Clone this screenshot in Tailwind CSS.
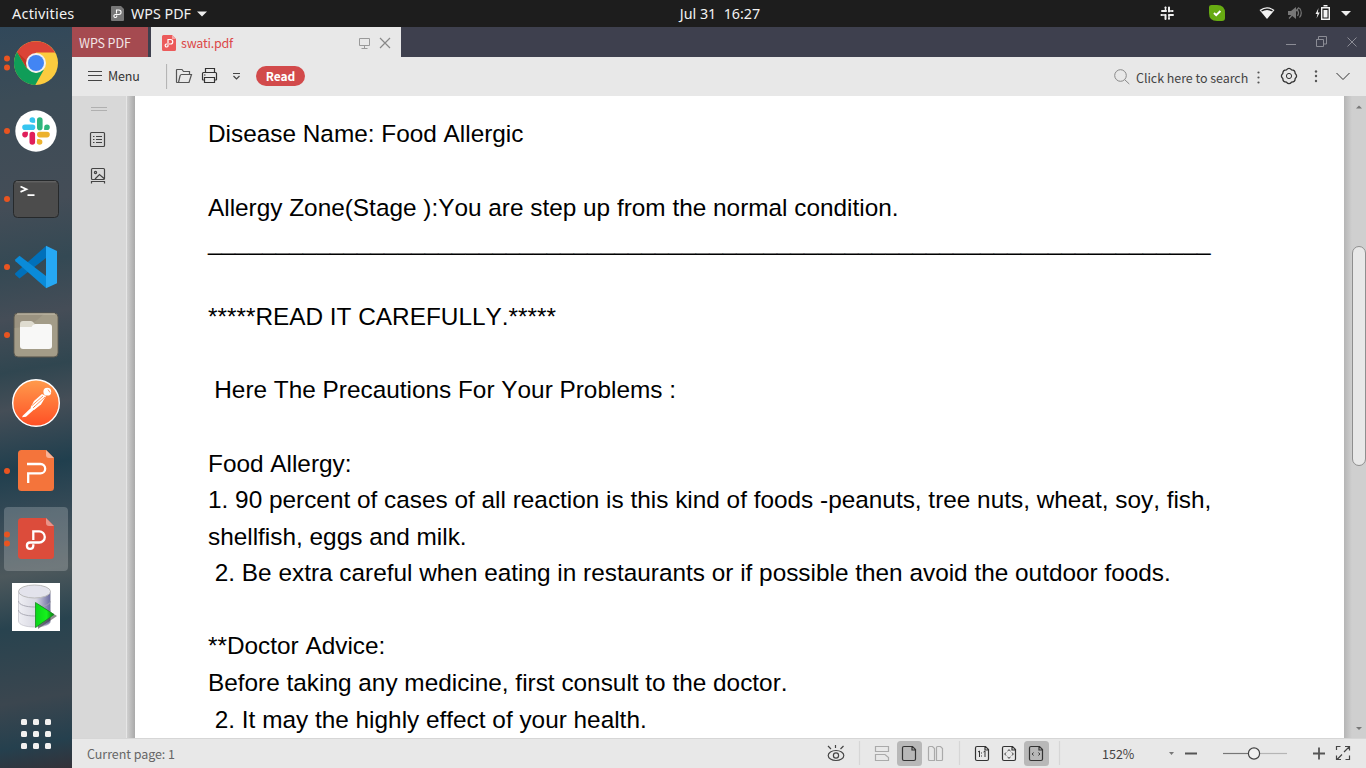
<!DOCTYPE html>
<html lang="en">
<head>
<meta charset="utf-8">
<title>WPS PDF</title>
<script src="https://cdn.jsdelivr.net/npm/@tailwindcss/browser@4"></script>
</head>
<body class="w-[1366px] h-[768px] overflow-hidden flex flex-col bg-[#e7e7e7] font-['Noto_Sans_CJK_SC',sans-serif]">
<!-- system bar -->
<header class="h-[27px] shrink-0 bg-[#1d1d1d] text-[#f2f2f2] grid grid-cols-[620px_200px_1fr] items-center font-['Noto_Sans',sans-serif] text-[14px] leading-[27px] whitespace-pre">
  <div class="flex items-center pl-3">
    <span class="w-[99px] text-[14.500px] tracking-[0.200px]">Activities</span>
    <svg class="w-[13px] h-[15px] mr-[7px]" viewBox="0 0 13 15"><path d="M1 0h9l3 3v11a1 1 0 0 1-1 1H1a1 1 0 0 1-1-1V1a1 1 0 0 1 1-1z" fill="#777"/><path d="M5.500 7.500V4h2.300a2.200 2.200 0 0 1 0 4.500H4.500a1.500 1.500 0 1 0 1.200 2.200V9.500" fill="none" stroke="#fff" stroke-width="1.100"/></svg>
    <span class="w-[66px] text-[14.300px]">WPS PDF</span>
    <svg class="w-[10px] h-[6px]" viewBox="0 0 10 6"><path d="M0 .5h10L5 5.500z" fill="#eee"/></svg>
  </div>
  <div class="text-center text-[14.300px]">Jul 31  16:27</div>
  <svg class="w-[286px] h-[27px] ml-[260px]" viewBox="1080 0 286 27" fill="none">
    <g stroke="#f2f2f2" stroke-width="2" stroke-linecap="round"><path d="M1165.500 7.500h0M1162 11h4M1169 7.500v4M1172.500 11h0M1161.500 15h0M1165.500 15v4M1169 15h4M1169 18.700h0"/><path d="M1165.500 7.500v3.500M1169 11h3.500M1161.500 15h4M1169 15v3.500" stroke-width="1.500"/></g>
    <path d="M1209 7q0-2 2.500-2h5.500q8 0 8 8v5q0 3-3 3h-5q-8 0-8-8z" fill="#67ab12"/><path d="m1214 13 2.200 2.200 4.200-4.200" stroke="#fff" stroke-width="2"/>
    <path d="M1259.500 10q7.500-5.500 15 0l-7.500 9z" fill="#f2f2f2"/><path d="M1261.500 11q5.500-3.500 11 0" stroke="#1d1d1d" stroke-width="1.300"/>
    <path d="M1288 11h3l5-4v12l-5-4h-3z" fill="#777"/><path d="M1297.500 10q2 3 0 6M1299.500 8q3.500 5 0 9.500M1289 18.500l10-11" stroke="#777" stroke-width="1.200"/>
    <path d="M1318.500 8l-3 6h2l-1 4.500 3.300-6h-2z" fill="#f2f2f2"/><path d="M1321.700 7.700h7.600v11.600h-7.600zM1323.500 5.800h4" stroke="#f2f2f2" stroke-width="1.400"/><path d="M1323.500 10h4v7.500h-4z" fill="#f2f2f2"/>
    <path d="M1341 11h10l-5 5z" fill="#eee"/>
  </svg>
</header>
<div class="flex flex-1 min-h-0">
<!-- dock -->
<nav class="w-[72px] shrink-0 flex flex-col justify-between bg-[linear-gradient(170deg,#31485a_0%,#3c4c57_10%,#444d57_24%,#344954_32%,#454d57_39%,#304650_46%,#454e57_51%,#203f4e_59%,#384b57_66%,#4d585c_73%,#28434f_80%,#3b464f_90%,#25404e_96%,#343239_100%)]">
  <div class="flex flex-col gap-1 pt-1 pl-1">
    <div class="w-16 h-16 flex items-center"><svg class="w-16 h-16" viewBox="4 0 64 64"><g fill="#e95420"><circle cx="7" cy="27.500" r="3"/><circle cx="7" cy="36.500" r="3"/></g>
      <circle cx="36" cy="32" r="22" fill="#fccb3f"/><path d="M17 20.900A22 22 0 0 1 55.100 21.500H36L26.500 37z" fill="#db4437"/><path d="M17 20.900A22 22 0 0 0 35.300 54l8.700-15.500-8 3.500-9.500-5z" fill="#0f9d58"/><path d="M17 20.900l9.500 16 .5-7z" fill="#a52714" opacity=".5"/><circle cx="36" cy="32" r="10" fill="#f1f1f1"/><circle cx="36" cy="32" r="8" fill="#4285f4"/></svg></div>
    <div class="w-16 h-16"><svg class="w-16 h-16" viewBox="4 0 64 64"><circle cx="7" cy="32" r="3" fill="#e95420"/><circle cx="36" cy="32" r="20.700" fill="#fff"/>
      <g stroke-width="5.600" stroke-linecap="round"><path d="M25 28.200h7.500M32.300 21h0" stroke="#36c5f0"/><path d="M39.800 21v7.400M47 28.200h0" stroke="#2eb67d"/><path d="M39.800 35.600H47M39.600 43h0" stroke="#ecb22e"/><path d="M32.300 35.600V43M25 35.600h0" stroke="#e01e5a"/></g><path d="M32.500 21h2.600v2.800h-2.800z" fill="#36c5f0"/><path d="M44.200 28.400v2.600h2.800z" fill="#2eb67d"/><path d="M37 40.200v2.800h2.800v-2.800z" fill="#ecb22e"/><path d="M25 32.800h2.800v2.800H25z" fill="#e01e5a"/></svg></div>
    <div class="w-16 h-16"><svg class="w-16 h-16" viewBox="4 0 64 64"><circle cx="7" cy="32" r="3" fill="#e95420"/><rect x="13.500" y="13.500" width="45" height="37" rx="4" fill="#4c4c4c" stroke="#26292b"/><path d="M16 14.800h40" stroke="#6b6b6b"/><path d="M20.500 19.500l6 2.700-6 2.700M27.500 28.200h7" fill="none" stroke="#fff" stroke-width="1.700"/></svg></div>
    <div class="w-16 h-16"><svg class="w-16 h-16" viewBox="4 0 64 64"><circle cx="7" cy="32" r="3" fill="#e95420"/><path d="M19.500 43.500l-4-3.600q-1-1 0-2L46 11v12z" fill="#0070ba"/><path d="M19.500 20.700l-4 3.600q-1 1 0 2L46 53V41z" fill="#0a8bd9"/><path d="M46 10.800l11 5.200v32.200L46 53.200z" fill="#26a8f4"/></svg></div>
    <div class="w-16 h-16"><svg class="w-16 h-16" viewBox="4 0 64 64"><circle cx="7" cy="32" r="3" fill="#e95420"/><rect x="14" y="10" width="44" height="44" rx="4" fill="#9a9280" stroke="#5a584f"/><path d="M18 10.800h36q3.300 0 3.300 3.500V49q0 4-3.300 4H18q-3.300 0-3.300-4V25q16 0 29-14z" fill="#a39c88"/><path d="M17 11h38" stroke="#c7c0ae"/><rect x="20" y="21" width="32" height="25" rx="3" fill="#f8f8f7"/><path d="M20 24v-3q0-3 3-3h8q1.500 0 2.500 1.500l1.500 1.800q-2.500 0-3.500 2.700z" fill="#dfdcd0"/></svg></div>
    <div class="w-16 h-16"><svg class="w-16 h-16" viewBox="4 0 64 64"><defs><linearGradient id="pm" x2="0" y2="1"><stop stop-color="#ff9b4c"/><stop offset="1" stop-color="#ff4f25"/></linearGradient></defs><circle cx="36" cy="32" r="23.300" fill="url(#pm)" stroke="#fff" stroke-width="1.400"/><circle cx="47.300" cy="20.700" r="3.900" fill="#fff"/><path d="M46 25l-4-2-8 7-3.500 6.500L34 39l7-5.500z" fill="#fff"/><path d="M34 34l-11 10.500-1 1.800 4-.5L38 35z" fill="#fff"/><path d="M43 25L32 34.500M45 26L34 36M48 18.500l2 3M33 37l2-2" stroke="#ff7a38" stroke-width=".8"/></svg></div>
    <div class="w-16 h-16"><svg class="w-16 h-16" viewBox="4 0 64 64"><circle cx="7" cy="32" r="3" fill="#e95420"/><path d="M21.500 11H46l8 8v29.500q0 3.500-3.500 3.500h-29Q18 52 18 48.500v-34Q18 11 21.500 11z" fill="#f4743b"/><path d="M46 11l8 8h-5q-3 0-3-3z" fill="#f9b295"/><path d="M27 25h13.500a4.700 4.700 0 0 1 0 9.400H28.200V44" fill="none" stroke="#fff" stroke-width="2.300"/></svg></div>
    <div class="w-16 h-16 rounded bg-white/20"><svg class="w-16 h-16" viewBox="4 0 64 64"><g fill="#e95420"><circle cx="7" cy="27.500" r="3"/><circle cx="7" cy="36.500" r="3"/></g><path d="M21.500 11H46l8 8v29.500q0 3.500-3.500 3.500h-29Q18 52 18 48.500v-34Q18 11 21.500 11z" fill="#dc4c3b"/><path d="M46 11l8 8h-5q-3 0-3-3z" fill="#ea9489"/><path d="M33.300 33V24.300h5.900a5.600 5.600 0 0 1 0 11.200H30a3.200 3.200 0 1 0 3.300 3.300v-1.500" fill="none" stroke="#fff" stroke-width="2.300"/></svg></div>
    <div class="w-16 h-16"><svg class="w-16 h-16" viewBox="4 0 64 64"><defs><linearGradient id="db"><stop stop-color="#eeeef3"/><stop offset=".55" stop-color="#d8d8e2"/><stop offset="1" stop-color="#6a6aa0"/></linearGradient><linearGradient id="pl"><stop stop-color="#0ad51a"/><stop offset=".6" stop-color="#15f21c"/><stop offset="1" stop-color="#087b12"/></linearGradient></defs><path d="M12 8h48v48H12z" fill="#fff"/><path d="M18.500 16v30c0 8 32 8 32 0V16" fill="url(#db)" stroke="#c0c0c8" stroke-width=".7"/><ellipse cx="34.500" cy="16.500" rx="16" ry="6.500" fill="#e3e3ec" stroke="#bbb"/><path d="M18.500 26c0 8 32 8 32 0M18.500 35c0 8 32 8 32 0" fill="none" stroke="#a5a5b0" stroke-width=".9"/><path d="M38 29l19 12-19 13z" fill="#333" opacity=".55"/><path d="M35.500 27.500l18.500 12-18.500 13z" fill="url(#pl)" stroke="#168a20" stroke-width=".8"/></svg></div>
  </div>
  <svg class="w-[72px] h-[60px] mb-1" viewBox="0 704 72 60" fill="#f2f1f0"><g id="r"><rect x="21" y="719" width="6" height="6" rx="1.500"/><rect x="33" y="719" width="6" height="6" rx="1.500"/><rect x="45" y="719" width="6" height="6" rx="1.500"/></g><use href="#r" y="12"/><use href="#r" y="24"/></svg>
</nav>
<!-- application window -->
<main class="flex-1 min-w-0 flex flex-col">
  <div class="h-[30px] shrink-0 bg-[#3e404e] flex text-[12.500px] leading-[32px]">
    <div class="w-[76px] bg-[#a54a50] text-[#f3e4e5] pl-[7px] mr-[3px] whitespace-pre tracking-[-0.100px]">WPS PDF</div>
    <div class="w-[250px] bg-[#e8e8e8] flex items-center pl-[11px]">
      <svg class="w-[14px] h-[16px] mr-[5px] mt-[2px]" viewBox="0 0 14 16"><path d="M1.500 0H10l4 4v10.500a1.500 1.500 0 0 1-1.500 1.500h-11A1.500 1.500 0 0 1 0 14.500v-13A1.500 1.500 0 0 1 1.500 0z" fill="#ec5b5b"/><path d="M10 0l4 4h-4z" fill="#f6a6a6"/><path d="M6 8V4.500h2.500a2.200 2.200 0 0 1 0 4.500H4.500a1.500 1.500 0 1 0 1.500 2.200V10" fill="none" stroke="#fff" stroke-width="1.200"/></svg>
      <span class="w-[177px] mt-px text-[#dc4848] tracking-[-0.200px]">swati.pdf</span>
      <svg class="w-[34px] h-[14px] mt-[2px]" viewBox="358 36 34 14" fill="none"><path d="M359.500 38.500h10v7h-10zM364.500 45.500v3M361.500 48.500h6" stroke="#999"/><path d="M380 38l10 10M390 38l-10 10" stroke="#888" stroke-width="1.200"/></svg>
    </div>
    <svg class="w-[80px] h-[30px] ml-auto" viewBox="1286 27 80 30" fill="none" stroke="#8b8c95"><path d="M1286 44.500h10M1316.500 39.500h7v7h-7zM1318.500 39v-2.500h8v7.500h-3M1347.500 37.500l9 9M1356.500 37.500l-9 9"/></svg>
  </div>
  <div class="h-[39px] shrink-0 bg-[#e8e8e8] flex items-center text-[13px] text-[#333]">
    <svg class="w-[14px] h-[10px] ml-4 mr-[6px] mb-[2px]" viewBox="0 0 14 10"><path d="M0 .5h14M0 4.500h14M0 9.500h14" stroke="#444"/></svg>
    <span class="w-[58px] text-[12.500px] tracking-[-0.150px]">Menu</span>
    <svg class="w-[90px] h-[39px]" viewBox="166 57 90 39" fill="none" stroke="#555" stroke-width="1.200"><path d="M166.500 64v25" stroke="#b5b5b5"/><path d="M178.500 82.500h-1.500q-.5 0-.5-.5V70q0-.5.500-.5h5l1.500 2h6v3M178.500 82.500h10.500l2.500-8h-10q-1 0-1.500 1.500z"/><path d="M205.500 73v-4.500h9V73M204.500 80h-1.500q-.5 0-.5-.5v-6q0-1 1-1h12q1 0 1 1v6q0 .5-.5.500H214.500M204.500 77.500h10v5h-10zM204 75h1.500" stroke="#333"/><path d="M233 73.500h7M233.500 76l3 3 3-3" stroke="#444"/></svg>
    <span class="w-[49px] h-5 mb-px rounded-full bg-[#d24a4b] text-white font-bold text-center leading-5 text-[12px]">Read</span>
    <svg class="w-[16px] h-[16px] ml-auto mr-[6px]" viewBox="0 0 16 16" fill="none" stroke="#888"><circle cx="6.500" cy="6.500" r="5.800"/><path d="M10.700 10.700l4.600 4.300"/></svg>
    <span class="w-[113px] mt-[4px] text-[12.500px] tracking-[-0.050px] text-[#444] whitespace-nowrap">Click here to search</span>
    <svg class="w-[117px] h-[39px]" viewBox="1249 57 117 39" fill="none" stroke="#333"><g fill="#555" stroke="none"><circle cx="1258.500" cy="72.500" r="1.100"/><circle cx="1258.500" cy="77.500" r="1.100"/><circle cx="1258.500" cy="82.500" r="1.100"/><circle cx="1316" cy="71.500" r="1.200"/><circle cx="1316" cy="76" r="1.200"/><circle cx="1316" cy="81" r="1.200"/></g><path d="M1286.500 69.800Q1289 67 1291.500 69.800Q1295.200 69.800 1295.200 73.500Q1298 76 1295.200 78.500Q1295.200 82.200 1291.500 82.200Q1289 85 1286.500 82.200Q1282.800 82.200 1282.800 78.500Q1280 76 1282.800 73.500Q1282.800 69.800 1286.500 69.800z" stroke-width="1.300"/><circle cx="1289" cy="76" r="2.600"/><path d="M1336.500 73l6.500 6.500 6.500-6.500"/></svg>
  </div>
  <div class="flex-1 min-h-0 flex bg-[#d8d8d8]">
    <aside class="w-[55px] shrink-0 border-r border-[#e6e6e6]">
      <svg class="w-[54px] h-[100px]" viewBox="72 96 54 100" fill="none" stroke="#444" stroke-width="1.200"><path d="M91 107.500h16M91 110.500h16" stroke="#b0b0b0" stroke-width="1"/><rect x="90.500" y="132.500" width="14" height="14" rx="1"/><path d="M93 136.500h1.500M96 136.500h6M93 139.500h1.500M96 139.500h6M93 142.500h1.500M96 142.500h6"/><path d="M91.500 183.500v-2h13v2M92.500 179.500q-1 0-1-1v-9q0-1 1-1h11q1 0 1 1v9q0 1-1 1zM95 179l4.500-4.500 4.500 4"/><circle cx="95.500" cy="172.500" r="1.100"/></svg>
    </aside>
    <div class="w-[8px] shrink-0 bg-linear-to-r from-[#d0d0d0] to-[#a9a9a9]"></div>
    <article class="w-[1209px] shrink-0 flex flex-col bg-white overflow-hidden pl-[73px] pt-[20px] font-['Liberation_Sans',sans-serif] text-[24.370px] leading-[36.600px] text-black whitespace-pre [font-kerning:none]"><p>Disease Name: Food Allergic</p><p> </p><p class="pt-px -mb-px">Allergy Zone(Stage ):You are step up from the normal condition.</p><p class="-mt-[2px] mb-[2px]">__________________________________________________________________________</p><p> </p><p>*****READ IT CAREFULLY.*****</p><p> </p><p class="-ml-[0.500px]"> Here The Precautions For Your Problems :</p><p> </p><p class="pt-px -mb-px">Food Allergy:</p><p>1. 90 percent of cases of all reaction is this kind of foods -peanuts, tree nuts, wheat, soy, fish,</p><p>shellfish, eggs and milk.</p><p> 2. Be extra careful when eating in restaurants or if possible then avoid the outdoor foods.</p><p> </p><p>**Doctor Advice:</p><p>Before taking any medicine, first consult to the doctor.</p><p> 2. It may the highly effect of your health.</p></article>
    <div class="flex-1 flex flex-col items-end justify-between bg-[linear-gradient(to_right,#b5b5b5,#cfcfcf_8px)]">
      <svg class="w-[14px] h-[20px]" viewBox="0 0 14 20"><path d="M4 12.500h6l-3-3z" fill="#777"/></svg>
      <div class="w-[14px] h-[220px] rounded-full bg-[#e8e8e8] border border-[#8f8f8f] mb-[130px] mt-[8px]"></div>
      <svg class="w-[14px] h-[20px]" viewBox="0 0 14 20"><path d="M4 9h6l-3 3z" fill="#777"/></svg>
    </div>
  </div>
  <footer class="h-[30px] shrink-0 bg-[#e8e8e8] border-t border-[#d6d6d6] flex items-center text-[12.500px] text-[#666]">
    <span class="w-[740px] pl-[15px] pt-[2px] tracking-[-0.050px]">Current page: 1</span>
    <svg class="w-[290px] h-[29px] shrink-0" viewBox="812 739 290 29" fill="none" stroke="#333" stroke-width="1.200"><path d="M859.500 741v24M959.500 741v24M1059.500 741v24" stroke="#d6d6d6"/><ellipse cx="836" cy="755.500" rx="7.800" ry="5" stroke="#444"/><circle cx="836" cy="755.500" r="2.600" stroke="#444"/><path d="M835.500 748v-3M831 749l-3-3M840.500 749l3-3" stroke="#444"/>
    <rect x="897" y="741" width="25" height="25" rx="3.500" fill="#b8b8b8" stroke="none"/><rect x="1024" y="741" width="25" height="25" rx="3.500" fill="#b8b8b8" stroke="none"/>
    <path d="M875.500 746.500h13v5h-13zM888.500 760.500h-13v-6h9.500l3.500 3z" stroke="#aaa"/><path d="M928.500 747.500q0-1 1-1h3l2 2v12h-5q-1 0-1-1zM936.500 747.500q0-1 1-1h3l2 2v11q0 1-1 1h-5z" stroke="#aaa"/>
    <g id="pg"><path d="M902.500 748q0-1.500 1.500-1.500h8.500l3 3V759q0 1.500-1.500 1.500h-10q-1.500 0-1.500-1.500zM912 746.500v3.500h3.500"/></g><use href="#pg" x="73"/><use href="#pg" x="100"/><use href="#pg" x="127"/>
    <path d="M978 752l1.500-1v6M983.500 752l1.500-1v6M981.500 752.500v1M981.500 755.500v1" stroke-width="1"/><path d="M1007.500 751l1.500-1.300 1.500 1.300M1007.500 757l1.500 1.300 1.500-1.300M1006 752.500l-1.300 1.500 1.300 1.500M1012 752.500l1.300 1.500-1.300 1.500M1033.500 752.500l-1.300 1.500 1.300 1.500M1038.500 752.500l1.300 1.500-1.300 1.500" stroke-width="1"/></svg>
    <span class="w-[64px] text-[#444] text-[12.500px] pt-px">152%</span>
    <svg class="w-[200px] h-[29px] shrink-0" viewBox="1166 739 200 29" fill="none" stroke="#444" stroke-width="1.200"><path d="M1169 752h5l-2.500 3z" fill="#777" stroke="none"/><path d="M1185 753.500h12M1313 753.500h12M1319 747.500v12" stroke="#555" stroke-width="1.800"/><path d="M1223 753.500h25" stroke="#777"/><path d="M1260 753.500h27" stroke="#b5b5b5"/><circle cx="1254" cy="753.500" r="5.600" fill="#f0f0f0"/><path d="M1336.500 750v-3.500h4M1345 746.500h4.500v4M1349.500 755.500v4h-4M1341 759.500h-4.500v-4M1344 752l5-5M1342 754.500l-5 5"/></svg>
  </footer>
</main>
</div>
</body>
</html>
